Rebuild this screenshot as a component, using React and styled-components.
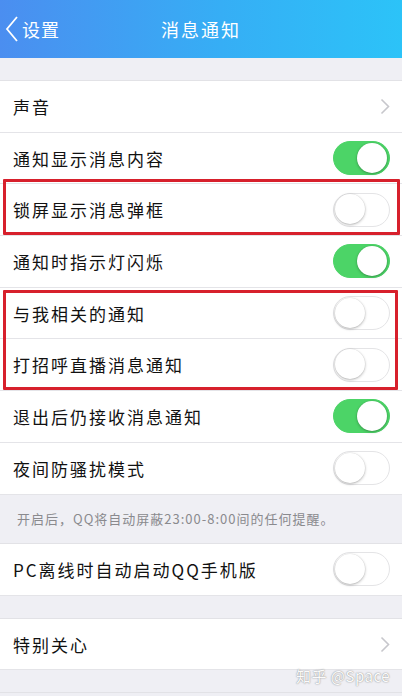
import React from 'react';
import styled, { createGlobalStyle } from 'styled-components';

const GlobalStyle = createGlobalStyle`
	html, body {
		margin: 0;
		padding: 0;
		background: #efeff4;
	}
	body {
		font-family: 'Noto Sans CJK SC', 'Noto Sans', sans-serif;
		color: #111;
	}
`;

const Page = styled.div`
	position: relative;
	width: 402px;
	height: 696px;
	overflow: hidden;
	background: #efeff4;
`;

const NavBar = styled.header`
	height: 58px;
	display: grid;
	grid-template-columns: 1fr auto 1fr;
	align-items: center;
	background: linear-gradient(90deg, #4b8ef0 0%, #36aef5 55%, #2cc3f8 100%);
	color: #fff;
`;

const Back = styled.div`
	display: flex;
	align-items: center;
	gap: 3px;
	padding-left: 5px;
	font-size: 18px;
	letter-spacing: 1px;
`;

const Title = styled.div`
	font-size: 18px;
	letter-spacing: 2px;
`;

const Gap = styled.div`
	height: ${(p) => p.h}px;
`;

const Group = styled.section`
	background: #fff;
	border-top: 1px solid #e2e2e6;
`;

const Row = styled.div`
	display: flex;
	align-items: center;
	justify-content: space-between;
	box-sizing: border-box;
	height: 51.7px;
	padding: 0 12px 0 13px;
	border-bottom: 1px solid #e4e4e8;
	background: #fff;
`;

const Label = styled.span`
	font-size: 17px;
	letter-spacing: 2px;
`;

const Switch = styled.div`
	position: relative;
	box-sizing: border-box;
	width: 57px;
	height: 34px;
	border-radius: 17px;
	background: ${(p) => (p.on ? '#4cd467' : '#fff')};
	border: 1.5px solid ${(p) => (p.on ? '#4cd467' : '#e4e4e6')};
	&::after {
		content: '';
		position: absolute;
		top: 0.5px;
		left: ${(p) => (p.on ? '23px' : '0.5px')};
		width: 30px;
		height: 30px;
		border-radius: 50%;
		background: #fff;
		box-shadow: 0 1px 3px rgba(0, 0, 0, 0.28), 0 0 0 0.5px rgba(0, 0, 0, 0.06);
	}
`;

const Highlight = styled.div`
	position: relative;
	&::after {
		content: '';
		position: absolute;
		top: ${(p) => p.top}px;
		bottom: ${(p) => p.bottom}px;
		left: 3px;
		right: ${(p) => p.right}px;
		border: 3px solid #d7202c;
		border-radius: 1px;
		pointer-events: none;
	}
`;

const Note = styled.div`
	height: 48.5px;
	display: flex;
	align-items: center;
	padding-left: 17px;
	font-size: 13px;
	letter-spacing: 1px;
	color: #8a8a8e;
`;

const Watermark = styled.div`
	position: absolute;
	right: 12px;
	bottom: 10px;
	font-family: 'Noto Sans CJK SC', 'Liberation Sans', sans-serif;
	font-size: 15px;
	letter-spacing: 0.5px;
	color: #fbfbfb;
	text-shadow: 0 0 1px #8f8f8f, 0 0 2px #b0b0b0;
`;

const BottomLine = styled.div`
	height: 1px;
	background: #e2e2e6;
`;

function Chevron() {
	return (
		<svg width="10" height="17" viewBox="0 0 10 17">
			<path d="M1.5 1.5 L8.5 8.5 L1.5 15.5" fill="none" stroke="#c7c7cc" strokeWidth="1.6" />
		</svg>
	);
}

function BackArrow() {
	return (
		<svg width="14" height="28" viewBox="0 0 14 28">
			<path d="M12 2 L2 14 L12 26" fill="none" stroke="#fff" strokeWidth="1.8" />
		</svg>
	);
}

function SettingRow({ label, on, arrow }) {
	return (
		<Row>
			<Label>{label}</Label>
			{arrow ? <Chevron /> : <Switch on={on} />}
		</Row>
	);
}

export default function App() {
	return (
		<Page>
			<GlobalStyle />
			<NavBar>
				<Back>
					<BackArrow />
					设置
				</Back>
				<Title>消息通知</Title>
				<div />
			</NavBar>
			<Gap h={22} />
			<Group>
				<SettingRow label="声音" arrow />
				<SettingRow label="通知显示消息内容" on />
				<Highlight top={-5} bottom={1} right={2}>
					<SettingRow label="锁屏显示消息弹框" />
				</Highlight>
				<SettingRow label="通知时指示灯闪烁" on />
				<Highlight top={2} bottom={1} right={4}>
					<SettingRow label="与我相关的通知" />
					<SettingRow label="打招呼直播消息通知" />
				</Highlight>
				<SettingRow label="退出后仍接收消息通知" on />
				<SettingRow label="夜间防骚扰模式" />
			</Group>
			<Note>开启后，QQ将自动屏蔽23:00-8:00间的任何提醒。</Note>
			<Group>
				<SettingRow label="PC离线时自动启动QQ手机版" />
			</Group>
			<Gap h={22} />
			<Group>
				<SettingRow label="特别关心" arrow />
			</Group>
			<Gap h={22} />
			<BottomLine />
			<Watermark>知乎 @Space</Watermark>
		</Page>
	);
}
